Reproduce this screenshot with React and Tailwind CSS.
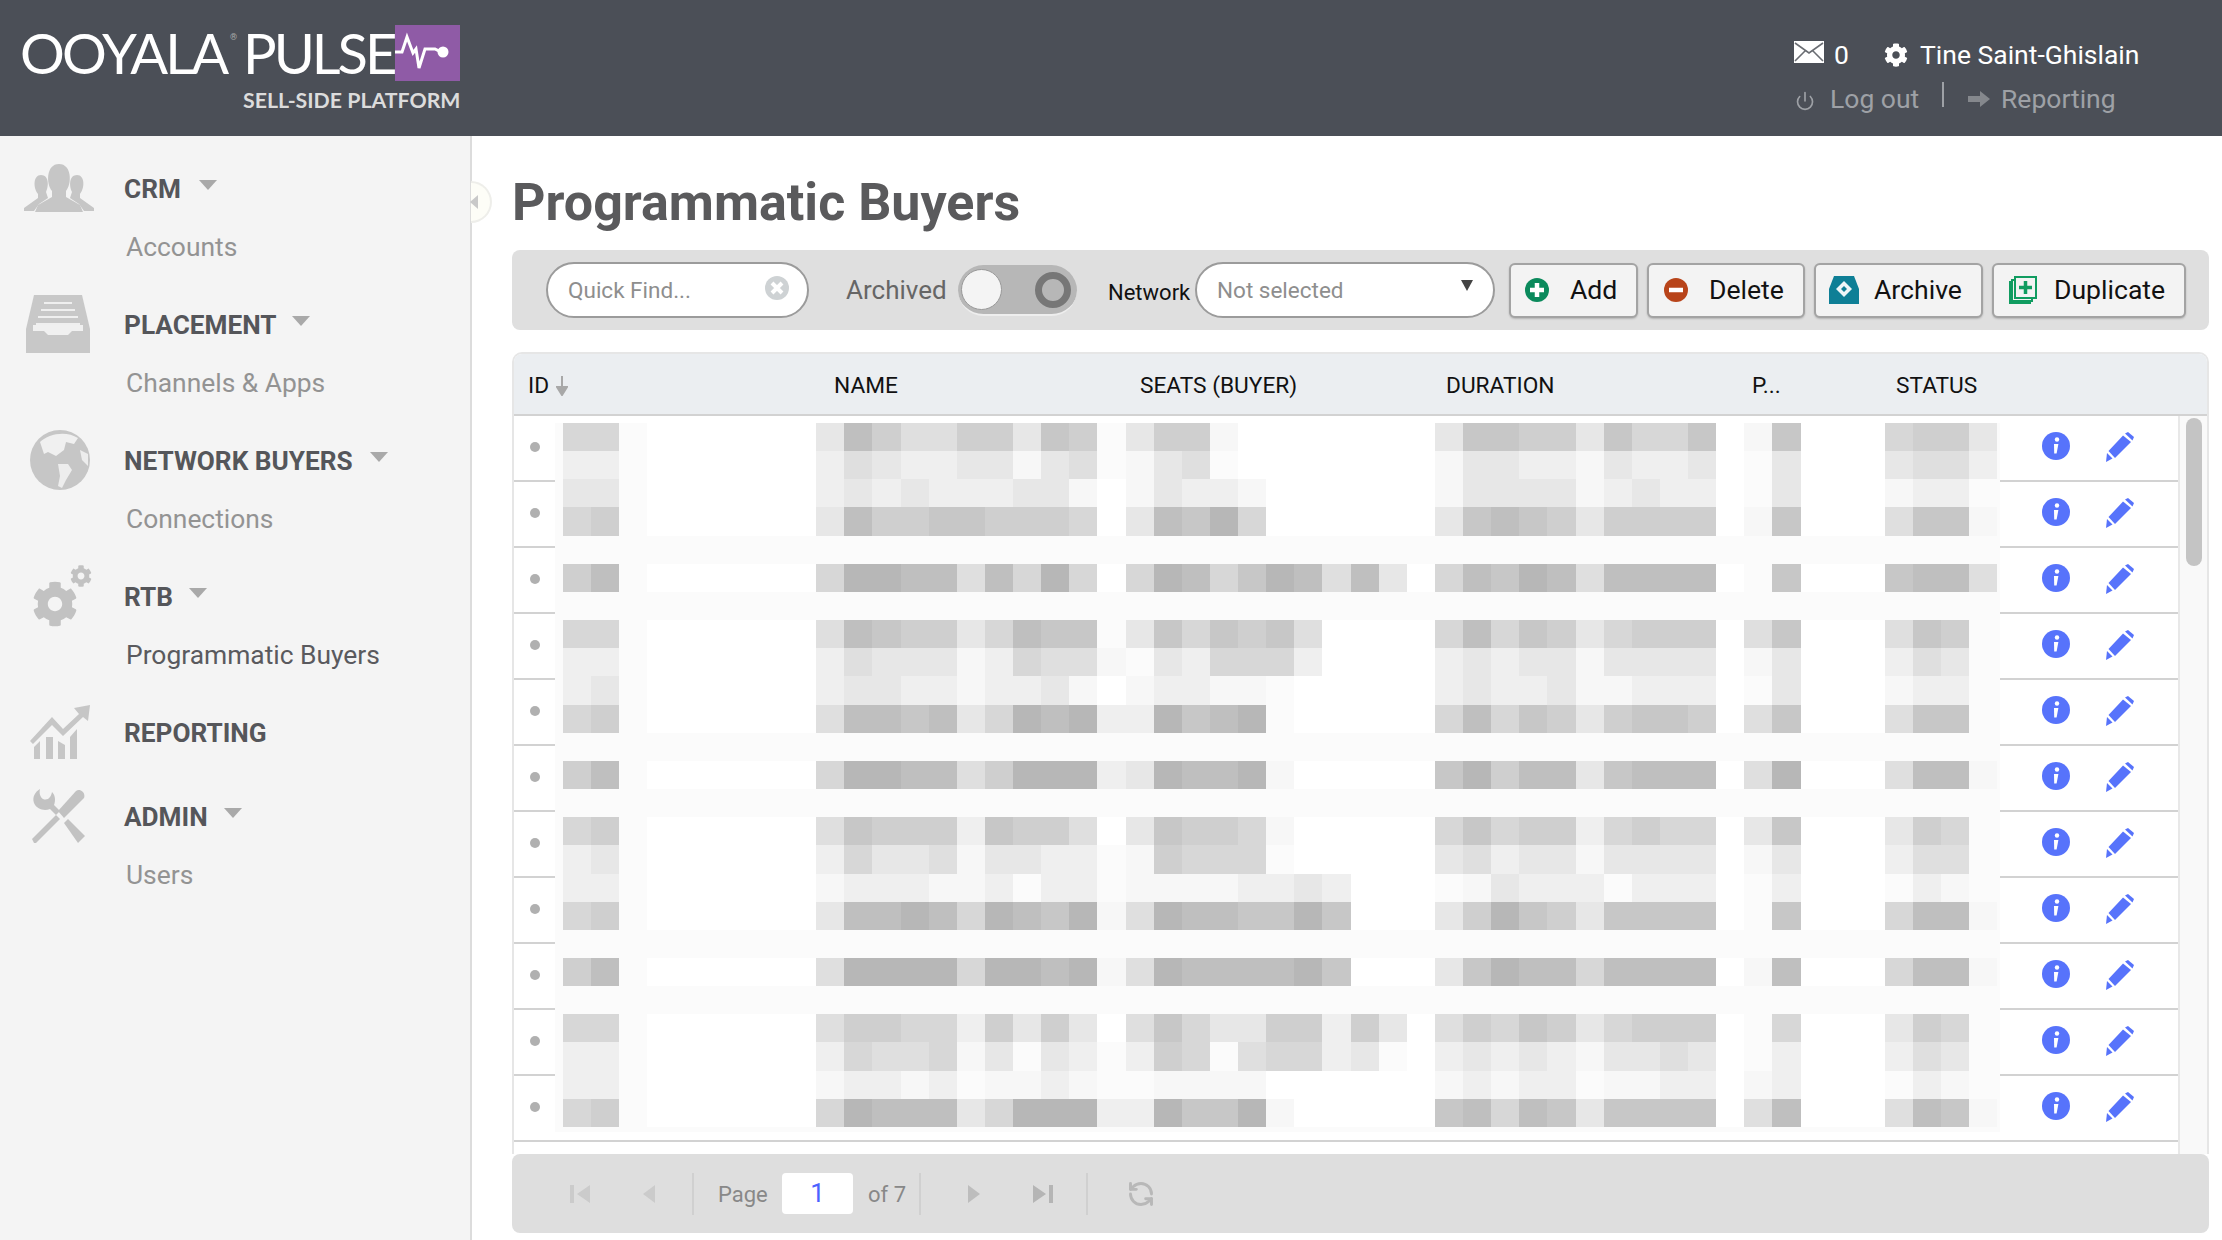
import { Fragment } from 'react'
import { Power, RefreshCw } from 'lucide-react'
import { FaCog } from 'react-icons/fa'

// blurred table content, per column group: id, name, gap, seats, duration, p, status
const blurRows = [
  ['55.', '3864466376', '.', '3661', '3776637557', '17', '5663'],
  ['22.', '2432233134', '.', '134.', '1332213223', '.3', '3442'],
  ['33.', '2323222331', '0', '13221', '1333312322', '.3', '122.'],
  ['56.', '3866776665', '0', '38795', '3787636666', '17', '4771'],
  null,
  ['68.', '5998848595', '0', '5985798483', '5879848888', '.7', '7884'],
  null,
  ['55.', '4876635877', '.', '3757674', '5857635666', '47', '476.'],
  ['22.', '2433312544', '1', '.325552', '2323313333', '13', '243.'],
  ['23.', '2332212231', '0', '12211.', '2322311222', '.3', '122.'],
  ['56.', '4887835989', '2', '29789.', '5857636776', '47', '477.'],
  null,
  ['68.', '5998846999', '2', '398891', '7968837888', '49', '4881'],
  null,
  ['56.', '4766627664', '0', '376651', '5756625655', '37', '365.'],
  ['23.', '2533413322', '.', '16555.', '3423313333', '13', '244.'],
  ['22.', '1222112.22', '.', '11112232', '.13222.222', '.2', '.21.'],
  ['56.', '3889859879', '1', '49887797', '3697637777', '.7', '5881'],
  null,
  ['68.', '4999959989', '1', '49888897', '3798858888', '18', '5881'],
  null,
  ['55.', '4665526363', '0', '4753366263', '4657635666', '.5', '365.'],
  ['22.', '2544513.32', '.', '265.45523.', '2323213343', '.2', '243.'],
  ['22.', '12212.1121', '.', '.1111', '12122.1122', '12', '.21.'],
  ['56.', '5988835999', '2', '297791', '7858737777', '48', '4871'],
]

const blur = blurRows.map((r) =>
  r
    ? r[0] + '000000' + r[1] + r[2] + r[3].padEnd(11, '0') + r[4] + '0' + r[5] + '000' + r[6]
    : '.'.repeat(51)
)

const cellColor = (c) => {
  if (c === '.') return '#fbfbfb'
  if (c === '0') return '#ffffff'
  const v = 255 - Number(c) * 8
  return `rgb(${v},${v},${v})`
}

function Blur() {
  return (
    <div className="absolute left-[41px] top-[7px] w-[1445px] h-[709px] bg-[#fbfbfb] pl-[8px]">
      <div className="grid grid-cols-[repeat(51,28.13px)] grid-rows-[repeat(25,28.16px)]">
        {blur.map((row, r) =>
          row.split('').map((c, i) => (
            <div key={`${r}-${i}`} style={{ backgroundColor: cellColor(c) }} />
          ))
        )}
      </div>
    </div>
  )
}

function Caret({ className }) {
  return (
    <svg viewBox="0 0 18 10" className={`w-[18px] h-[10px] ${className}`}>
      <path d="M0 0H18L9 10Z" fill="#a9a9a9" />
    </svg>
  )
}

function PeopleIcon() {
  return (
    <svg viewBox="0 0 70 48" className="w-[70px] h-[48px]" fill="#c6c6c6">
      <path d="M0 44 14 34 V30 C9 24 9 11 17 11 C25 11 25 22 22 28 L24 34 L15 40 L10 47 H0Z" />
      <path d="M70 44 56 34 V30 C61 24 61 11 53 11 C45 11 45 22 48 28 L46 34 L55 40 L60 47 H70Z" />
      <path d="M11 48 L14 41 L28 33 V27 C22 20 22 0 35 0 C48 0 48 20 42 27 V33 L56 41 L59 48Z" />
    </svg>
  )
}

function TrayIcon() {
  return (
    <svg viewBox="0 0 64 58" className="w-[64px] h-[58px]">
      <path d="M8 0H56L64 34V58H0V34Z" fill="#c8c8c8" />
      <path d="M18 8H46M15 15H49M12 22H52M10 29H54" stroke="#efefef" strokeWidth="2" />
      <path d="M7 30H57V36H46L42 40H22L18 36H7Z" fill="#f0f0f0" />
    </svg>
  )
}

function GlobeIcon() {
  return (
    <svg viewBox="0 0 60 60" className="w-[60px] h-[60px]">
      <circle cx="30" cy="30" r="30" fill="#c6c6c6" />
      <path d="M10 12 C18 4 36 0 48 8 L44 14 L36 12 L34 20 L26 26 L18 22 L14 24Z" fill="#f0f0f0" />
      <path d="M28 34 L38 34 L42 40 L36 50 L32 58 L28 56 L30 46Z" fill="#ededed" />
      <path d="M50 20 L58 24 L58 36 L52 30Z" fill="#ededed" />
    </svg>
  )
}

function GearsIcon() {
  return (
    <div className="relative w-[60px] h-[62px]">
      <FaCog className="absolute left-0 bottom-0 w-[46px] h-[46px] text-[#c2c2c2]" />
      <FaCog className="absolute right-0 top-0 w-[22px] h-[22px] text-[#c2c2c2]" />
    </div>
  )
}

function ChartIcon() {
  return (
    <svg viewBox="0 0 60 55" className="w-[60px] h-[55px]" fill="#c6c6c6">
      <path d="M4 42V54H10V36ZM16 32V54H23V32ZM28 36V54H35V40ZM40 32V54H47V24Z" />
      <path d="M0 36 22 12 33 24 49 9 44 3 60 0 58 16 53 12 33 31 22 20 3 39Z" />
    </svg>
  )
}

function ToolsIcon() {
  return (
    <svg viewBox="0 0 54 54" className="w-[54px] h-[54px]" fill="#c2c2c2">
      <path d="M2 54 0 50 24 26 28 30 4 54Z" />
      <path d="M26 22 44 2 C48 -1 54 4 52 9 L32 29Z" />
      <path d="M8 0 C3 3 0 8 2 14 C5 21 13 22 18 20 L24 26 L28 22 L22 16 C24 11 23 6 20 3 C19 8 16 12 11 10 C8 8 7 4 8 0Z" />
      <path d="M32 34 36 30 53 47 46 54Z" />
    </svg>
  )
}

function InfoIcon() {
  return (
    <svg viewBox="0 0 28 28" className="w-[28px] h-[28px]">
      <circle cx="14" cy="14" r="14" fill="#5773fb" />
      <circle cx="15" cy="7.5" r="2.2" fill="#fff" />
      <path d="M12 12H16.4L14.6 21.5H12.2Z" fill="#fff" />
    </svg>
  )
}

function PencilIcon() {
  return (
    <svg viewBox="0 0 28 30" className="w-[28px] h-[30px]" fill="#5773fb">
      <path d="M0 30 1 21 6.5 26.5Z" />
      <path d="M2.5 19 17 3.5 25 10 9 26Z" />
      <path d="M19 1.5 22 0 28 5 26.5 8.5Z" />
    </svg>
  )
}

function ArchiveIcon() {
  return (
    <svg viewBox="0 0 30 28" className="w-[30px] h-[28px]">
      <path d="M5 0H25L30 13V28H0V13Z" fill="#0e7f96" />
      <path d="M15 5 23 13 15 21 7 13Z" fill="#eef6f8" />
      <path d="M15 10 18 13 15 16 12 13Z" fill="#0e7f96" />
    </svg>
  )
}

function DuplicateIcon() {
  return (
    <svg viewBox="0 0 28 28" className="w-[28px] h-[28px]" fill="none" stroke="#109c60" strokeWidth="2">
      <path d="M3 6H1V27H21V25" />
      <path d="M5 4H3V25H23V23" />
      <rect x="6" y="1" width="21" height="21" />
      <path d="M16.5 5V18M10 11.5H23" strokeWidth="3.5" />
    </svg>
  )
}

function ToolButton({ icon, label, className, iconClass }) {
  return (
    <button className={`flex items-center h-[55px] bg-[#f3f3f3] border-2 border-[#a3a3a3] rounded-[6px] shadow-[0_1px_2px_rgba(0,0,0,0.2)] text-[26.6px] text-[#111] ${className}`}>
      <span className={iconClass}>{icon}</span>
      {label}
    </button>
  )
}

const nav = [
  { label: 'CRM', icon: <PeopleIcon />, iconClass: 'pl-[24px]', caret: 'ml-[18px] -mt-[6px]', sub: 'Accounts' },
  { label: 'PLACEMENT', icon: <TrayIcon />, iconClass: 'pl-[26px]', caret: 'ml-[15px] -mt-[6px]', sub: 'Channels & Apps' },
  { label: 'NETWORK BUYERS', icon: <GlobeIcon />, iconClass: 'pl-[30px]', caret: 'ml-[17px] -mt-[6px]', sub: 'Connections' },
  { label: 'RTB', icon: <GearsIcon />, iconClass: 'pl-[32px]', caret: 'ml-[16px] -mt-[6px]', sub: 'Programmatic Buyers', active: true },
  { label: 'REPORTING', icon: <ChartIcon />, iconClass: 'pl-[30px]' },
  { label: 'ADMIN', icon: <ToolsIcon />, iconClass: 'pl-[32px]', caret: 'ml-[16px] -mt-[6px]', sub: 'Users' },
]

const columns = 'grid grid-cols-[306px_306px_306px_306px_144px_158px_60px_68px]'

function App() {
  return (
    <div className="h-[1240px] overflow-hidden flex flex-col bg-white font-['Roboto',sans-serif]">
      <header className="h-[136px] shrink-0 bg-[#4b4f57] flex">
        <div className="pl-[20px] pt-[25px] w-[480px]">
          <div className="flex items-start h-[56px]">
            <span className="font-['Lato',sans-serif] font-normal text-[56px] leading-[56px] tracking-[-2.8px] text-white w-[210px] whitespace-nowrap">OOYALA</span>
            <span className="text-[9px] leading-[12px] mt-[6px] text-[#aaa] w-[13px]">®</span>
            <span className="font-['Lato',sans-serif] font-normal text-[56px] leading-[56px] tracking-[-3px] text-white w-[152px] whitespace-nowrap">PULSE</span>
            <svg viewBox="0 0 65 56" className="w-[65px] h-[56px] shrink-0">
              <rect width="65" height="56" fill="#8f5ba6" />
              <path d="M0 27H7L12 12L18 28L21 24L24 43L30 24H40L46 27H48" fill="none" stroke="#fff" strokeWidth="3" />
              <circle cx="48" cy="27" r="5.5" fill="#fff" />
            </svg>
          </div>
          <div className="pl-[223px] mt-[9px] font-['Lato',sans-serif] font-bold text-[21.3px] leading-[20px] text-[#dcdcdc] whitespace-nowrap">SELL-SIDE PLATFORM</div>
        </div>
        <div className="ml-auto w-[428px] pt-[35px] text-[26.5px]">
          <div className="flex items-center h-[40px] text-white">
            <svg viewBox="0 0 30 22" className="w-[30px] h-[22px] -mt-[6px]">
              <rect width="30" height="22" fill="#fff" />
              <path d="M1 2 15 12 29 2M1 20 11 10M29 20 19 10" fill="none" stroke="#6a6d73" strokeWidth="1.6" />
            </svg>
            <span className="ml-[10px] w-[14px]">0</span>
            <FaCog className="ml-[36px] w-[24px] h-[24px]" />
            <span className="ml-[12px] whitespace-nowrap">Tine Saint-Ghislain</span>
          </div>
          <div className="flex items-center h-[40px] mt-[4px] text-[#9ea1a6]">
            <Power className="ml-[1px] w-[20px] h-[20px] mt-[4px]" strokeWidth={2} />
            <span className="ml-[15px] w-[88px] whitespace-nowrap">Log out</span>
            <span className="ml-[24px] w-[2px] h-[25px] -mt-[10px] bg-[#9ea1a6]" />
            <svg viewBox="0 0 22 16" className="ml-[24px] w-[22px] h-[16px]"><path d="M0 5H12V0L22 8 12 16V11H0Z" fill="#85888d" /></svg>
            <span className="ml-[11px] whitespace-nowrap">Reporting</span>
          </div>
        </div>
      </header>

      <div className="flex flex-1 min-h-0">
        <aside className="relative w-[472px] shrink-0 bg-[#f4f4f4] border-r-2 border-[#dcdcdc] pt-[23px]">
          {nav.map((item) => (
            <Fragment key={item.label}>
              <div className="flex items-center h-[58px]">
                <div className={`w-[124px] shrink-0 ${item.iconClass}`}>{item.icon}</div>
                <span className="font-bold text-[26.2px] text-[#55565a] mt-[3px] whitespace-nowrap">{item.label}</span>
                {item.caret && <Caret className={item.caret} />}
              </div>
              {item.sub ? (
                <div className={`h-[78px] pl-[126px] pt-[12px] text-[26.4px] leading-[36px] ${item.active ? 'text-[#5a5a5e]' : 'text-[#939393]'}`}>{item.sub}</div>
              ) : (
                <div className="h-[26px]" />
              )}
            </Fragment>
          ))}
          <div className="absolute -right-[22px] top-[45px] w-[21px] h-[42px] rounded-r-full bg-[#fdfdf7] border-2 border-l-0 border-[#eeeeea] flex items-center">
            <svg viewBox="0 0 8 14" className="w-[8px] h-[14px] -ml-[1px]"><path d="M8 0V14L0 7Z" fill="#c9c9c9" /></svg>
          </div>
        </aside>

        <main className="flex-1 min-w-0 pl-[40px] pr-[13px]">
          <h1 className="h-[114px] pt-[38px] text-[52px] leading-[58px] font-bold text-[#5a5a5c] whitespace-nowrap">Programmatic Buyers</h1>

          <div className="h-[80px] bg-[#dfdfdf] rounded-[8px] flex items-center pl-[34px]">
            <div className="w-[263px] h-[56px] shrink-0 rounded-full bg-white border-2 border-[#9b9b9b] flex items-center pl-[20px] pr-[18px] text-[22.5px] text-[#8e8e8e]">
              <span className="flex-1 mt-[2px]">Quick Find...</span>
              <svg viewBox="0 0 24 24" className="w-[24px] h-[24px] -mt-[4px]">
                <circle cx="12" cy="12" r="12" fill="#ced2d4" />
                <path d="M7 7 17 17M17 7 7 17" stroke="#fff" strokeWidth="4" />
              </svg>
            </div>
            <span className="ml-[37px] w-[101px] text-[26px] text-[#666] whitespace-nowrap">Archived</span>
            <div className="relative ml-[11px] w-[119px] h-[51px] shrink-0 rounded-full bg-[#b7b7b7] border-b-2 border-[#eeeeee]">
              <div className="absolute left-[3px] top-[4px] w-[41px] h-[41px] rounded-full bg-[#f4f4f4] border border-[#999]" />
              <div className="absolute right-[6px] top-[7px] w-[36px] h-[36px] rounded-full border-[7px] border-[#777]" />
            </div>
            <span className="ml-[31px] w-[83px] text-[22px] text-[#111] mt-[4px] whitespace-nowrap">Network</span>
            <div className="relative ml-[4px] w-[300px] h-[56px] shrink-0 rounded-full bg-white border-2 border-[#9b9b9b] flex items-center pl-[20px] text-[22.5px] text-[#8e8e8e]">
              <span className="mt-[2px]">Not selected</span>
              <svg viewBox="0 0 12 11" className="absolute right-[20px] top-[16px] w-[12px] h-[11px]"><path d="M0 0H12L6 11Z" fill="#444" /></svg>
            </div>
            <div className="flex ml-[14px] gap-[9px]">
              <ToolButton
                className="w-[129px]"
                iconClass="pl-[14px] pr-[21px]"
                label="Add"
                icon={
                  <svg viewBox="0 0 24 24" className="w-[24px] h-[24px]">
                    <circle cx="12" cy="12" r="12" fill="#0b8a5c" />
                    <path d="M12 5V19M5 12H19" stroke="#fff" strokeWidth="4.5" />
                  </svg>
                }
              />
              <ToolButton
                className="w-[158px]"
                iconClass="pl-[15px] pr-[21px]"
                label="Delete"
                icon={
                  <svg viewBox="0 0 24 24" className="w-[24px] h-[24px]">
                    <circle cx="12" cy="12" r="12" fill="#b8441a" />
                    <path d="M5 12H19" stroke="#fff" strokeWidth="4.5" />
                  </svg>
                }
              />
              <ToolButton className="w-[169px]" iconClass="pl-[13px] pr-[15px]" label="Archive" icon={<ArchiveIcon />} />
              <ToolButton className="w-[194px]" iconClass="pl-[15px] pr-[17px]" label="Duplicate" icon={<DuplicateIcon />} />
            </div>
          </div>

          <div className="relative mt-[22px] h-[802px] border-2 border-b-0 border-[#e6e6e6] rounded-t-[10px]">
            <div className={`${columns} h-[62px] bg-[#ebeef1] rounded-t-[8px] border-b-2 border-[#d2d2d2] items-center text-[22.7px] text-[#111]`}>
              <div className="pl-[14px] pt-[4px] flex items-center">
                ID
                <svg viewBox="0 0 12 20" className="ml-[7px] w-[12px] h-[20px]"><path d="M6 0V14M1 11 6 19 11 11Z" fill="#a8a8a8" stroke="#a8a8a8" strokeWidth="2" /></svg>
              </div>
              <div className="pl-[14px] pt-[4px]">NAME</div>
              <div className="pl-[14px] pt-[4px]">SEATS (BUYER)</div>
              <div className="pl-[14px] pt-[4px]">DURATION</div>
              <div className="pl-[14px] pt-[4px]">P...</div>
              <div className="pl-[14px] pt-[4px]">STATUS</div>
            </div>
            <div className="flex">
              <div className="relative w-[1664px] shrink-0">
                {Array.from({ length: 11 }).map((_, i) => (
                  <div key={i} className={`${columns} h-[66px] border-b-2 border-[#d2d2d2] items-center`}>
                    <div className="pl-[16px] -mt-[2px]">
                      <div className="w-[10px] h-[10px] rounded-full bg-[#b0b0b0]" />
                    </div>
                    <div />
                    <div />
                    <div />
                    <div />
                    <div className="flex col-span-3 justify-end pr-[34px] gap-[36px] -mt-[2px]">
                      <InfoIcon />
                      <PencilIcon />
                    </div>
                  </div>
                ))}
                <Blur />
              </div>
              <div className="flex-1 h-[738px] bg-[#f9f9f9] border-l-2 border-[#e8e8e8] pl-[6px] pt-[2px]">
                <div className="w-[16px] h-[148px] rounded-full bg-[#c4c4c4]" />
              </div>
            </div>
          </div>

          <div className="h-[79px] bg-[#dedede] rounded-[8px] flex items-center text-[22px] text-[#888]">
            <svg viewBox="0 0 20 20" className="ml-[58px] w-[20px] h-[20px]" fill="#cbcbcb"><path d="M0 1H4V19H0ZM20 1V19L7 10Z" /></svg>
            <svg viewBox="0 0 12 20" className="ml-[53px] w-[12px] h-[20px]" fill="#cbcbcb"><path d="M12 1V19L0 10Z" /></svg>
            <span className="ml-[37px] w-[2px] h-[42px] bg-[#d0d0d0]" />
            <span className="ml-[24px] w-[50px] mt-[2px]">Page</span>
            <div className="ml-[14px] w-[71px] h-[41px] bg-white rounded-[4px] flex items-center justify-center text-[#4c62ff] text-[26px]">1</div>
            <span className="ml-[15px] w-[36px] mt-[2px] whitespace-nowrap">of 7</span>
            <span className="ml-[15px] w-[2px] h-[42px] bg-[#d0d0d0]" />
            <svg viewBox="0 0 12 20" className="ml-[47px] w-[12px] h-[20px]" fill="#bdbdbd"><path d="M0 1V19L12 10Z" /></svg>
            <svg viewBox="0 0 20 20" className="ml-[53px] w-[20px] h-[20px]" fill="#b5b5b5"><path d="M0 1V19L13 10ZM16 1H20V19H16Z" /></svg>
            <span className="ml-[33px] w-[2px] h-[42px] bg-[#d0d0d0]" />
            <RefreshCw className="ml-[39px] w-[28px] h-[28px] -scale-x-100 text-[#b8b8b8]" strokeWidth={2.5} />
          </div>
        </main>
      </div>
    </div>
  )
}

export default App
